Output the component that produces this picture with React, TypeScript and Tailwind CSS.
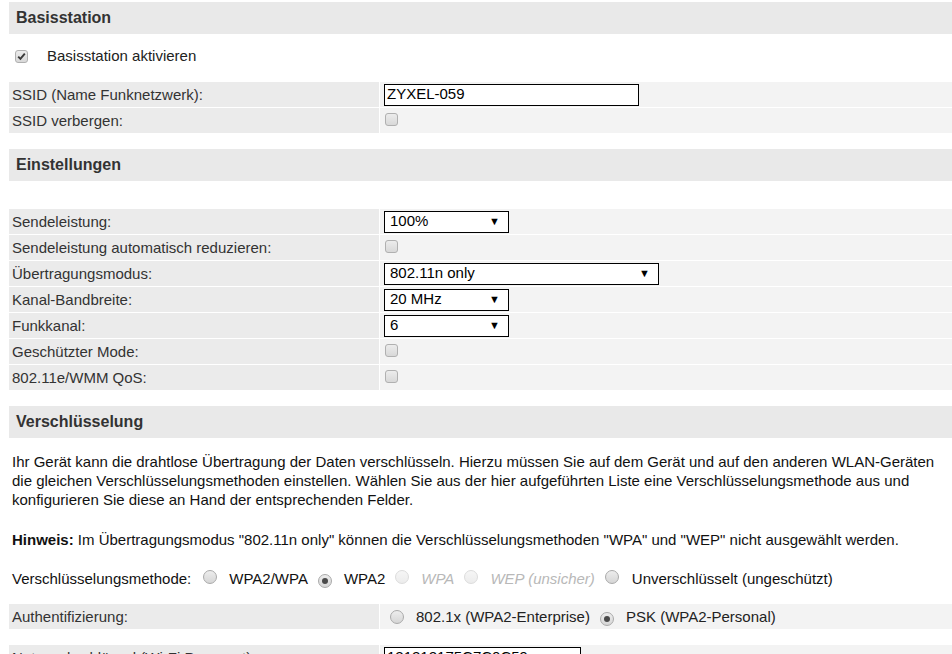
import React from "react";

const font = { fontFamily: '"Liberation Sans", Arial, sans-serif' };

function Checkbox({ checked = false }: { checked?: boolean }) {
  return (
    <span className="inline-flex h-[13px] w-[13px] shrink-0 items-center justify-center rounded-[3px] border border-[#b0b0b0] bg-gradient-to-b from-[#ececec] to-[#d8d8d8]">
      {checked && (
        <svg width="9" height="9" viewBox="0 0 9 9">
          <path d="M1.2 4.6 L3.4 6.9 L7.8 1.6" fill="none" stroke="#3a3a3a" strokeWidth="1.9" />
        </svg>
      )}
    </span>
  );
}

function Radio({ checked = false, disabled = false }: { checked?: boolean; disabled?: boolean }) {
  return (
    <span
      className={
        disabled
          ? "inline-flex h-[14px] w-[14px] shrink-0 items-center justify-center rounded-full border border-[#dcdcdc] bg-gradient-to-b from-[#f6f6f6] to-[#ececec]"
          : "inline-flex h-[14px] w-[14px] shrink-0 items-center justify-center rounded-full border border-[#aaaaaa] bg-gradient-to-b from-[#ededed] to-[#d6d6d6]"
      }
    >
      {checked && <span className="h-[6px] w-[6px] rounded-full bg-[#4a4a4a]" />}
    </span>
  );
}

function Select({ value, width }: { value: string; width: string }) {
  return (
    <div className={`flex h-[22px] items-center justify-between border border-black bg-white pl-[5px] pr-[8px] text-[15px] text-black ${width}`}>
      <span>{value}</span>
      <span className="text-[11px] leading-none">▼</span>
    </div>
  );
}

function TextInput({ value, width }: { value: string; width: string }) {
  return (
    <div className={`flex h-[22px] items-center border border-black bg-white pl-[2px] text-[15px] text-black ${width}`}>
      {value}
    </div>
  );
}

function Header({ title }: { title: string }) {
  return (
    <div className="flex h-[32px] items-center bg-[#e9e9e9] pl-[7px] text-[16px] font-bold text-[#333]">
      {title}
    </div>
  );
}

function Row({ label, children }: { label: string; children: React.ReactNode }) {
  return (
    <div className="flex h-[25px] gap-px">
      <div className="flex w-[370px] shrink-0 items-center bg-[#ebebeb] pl-[3px] pt-[2px] text-[15px] text-[#333]">
        {label}
      </div>
      <div className="flex flex-1 items-center bg-[#f3f3f3] pl-[4px]">{children}</div>
    </div>
  );
}

function CheckCell() {
  return (
    <span className="pl-px pt-px">
      <Checkbox />
    </span>
  );
}

export default function App() {
  return (
    <div className="min-h-[654px] w-[952px] overflow-hidden bg-white" style={font}>
      <div className="ml-[9px] w-[960px] pt-[2px]">
        <Header title="Basisstation" />
        <div className="flex h-[48px] items-center gap-[19px] pb-[4px] pl-[6px] text-[15px] text-[#222]">
          <Checkbox checked />
          <span>Basisstation aktivieren</span>
        </div>
        <div className="flex flex-col gap-px">
          <Row label="SSID (Name Funknetzwerk):">
            <TextInput value="ZYXEL-059" width="w-[255px]" />
          </Row>
          <Row label="SSID verbergen:">
            <CheckCell />
          </Row>
        </div>

        <div className="mt-[16px]">
          <Header title="Einstellungen" />
        </div>
        <div className="mt-[28px] flex flex-col gap-px">
          <Row label="Sendeleistung:">
            <Select value="100%" width="w-[125px]" />
          </Row>
          <Row label="Sendeleistung automatisch reduzieren:">
            <CheckCell />
          </Row>
          <Row label="Übertragungsmodus:">
            <Select value="802.11n only" width="w-[275px]" />
          </Row>
          <Row label="Kanal-Bandbreite:">
            <Select value="20 MHz" width="w-[125px]" />
          </Row>
          <Row label="Funkkanal:">
            <Select value="6" width="w-[125px]" />
          </Row>
          <Row label="Geschützter Mode:">
            <CheckCell />
          </Row>
          <Row label="802.11e/WMM QoS:">
            <CheckCell />
          </Row>
        </div>

        <div className="mt-[16px]">
          <Header title="Verschlüsselung" />
        </div>
        <div className="w-[940px] pl-[3px] text-[15px] leading-[19px] text-[#111]">
          <p className="mt-[14px]">
            Ihr Gerät kann die drahtlose Übertragung der Daten verschlüsseln. Hierzu müssen Sie auf dem Gerät und auf den anderen WLAN-Geräten die gleichen Verschlüsselungsmethoden einstellen. Wählen Sie aus der hier aufgeführten Liste eine Verschlüsselungsmethode aus und konfigurieren Sie diese an Hand der entsprechenden Felder.
          </p>
          <p className="mt-[21px]">
            <span className="font-bold">Hinweis:</span> Im Übertragungsmodus "802.11n only" können die Verschlüsselungsmethoden "WPA" und "WEP" nicht ausgewählt werden.
          </p>
          <div className="mt-[20px] flex h-[19px] items-center">
            <span>Verschlüsselungsmethode:</span>
            <span className="ml-[12px]"><Radio /></span>
            <span className="ml-[12px]">WPA2/WPA</span>
            <span className="ml-[10px]"><Radio checked /></span>
            <span className="ml-[12px]">WPA2</span>
            <span className="ml-[10px]"><Radio disabled /></span>
            <span className="ml-[12px] italic text-[#b8b8b8]">WPA</span>
            <span className="ml-[10px]"><Radio disabled /></span>
            <span className="ml-[12px] italic text-[#b8b8b8]">WEP (unsicher)</span>
            <span className="ml-[10px]"><Radio /></span>
            <span className="ml-[13px]">Unverschlüsselt (ungeschützt)</span>
          </div>
        </div>
        <div className="mt-[16px] flex flex-col gap-[16px]">
          <Row label="Authentifizierung:">
            <div className="flex items-center pl-[6px] pt-px text-[15px] text-[#222]">
              <Radio />
              <span className="ml-[12px]">802.1x (WPA2-Enterprise)</span>
              <span className="ml-[10px]"><Radio checked /></span>
              <span className="ml-[12px]">PSK (WPA2-Personal)</span>
            </div>
          </Row>
          <Row label="Netzwerkschlüssel (Wi-Fi Passwort):">
            <TextInput value="121212175C7C0C59" width="w-[197px]" />
          </Row>
        </div>
      </div>
    </div>
  );
}
